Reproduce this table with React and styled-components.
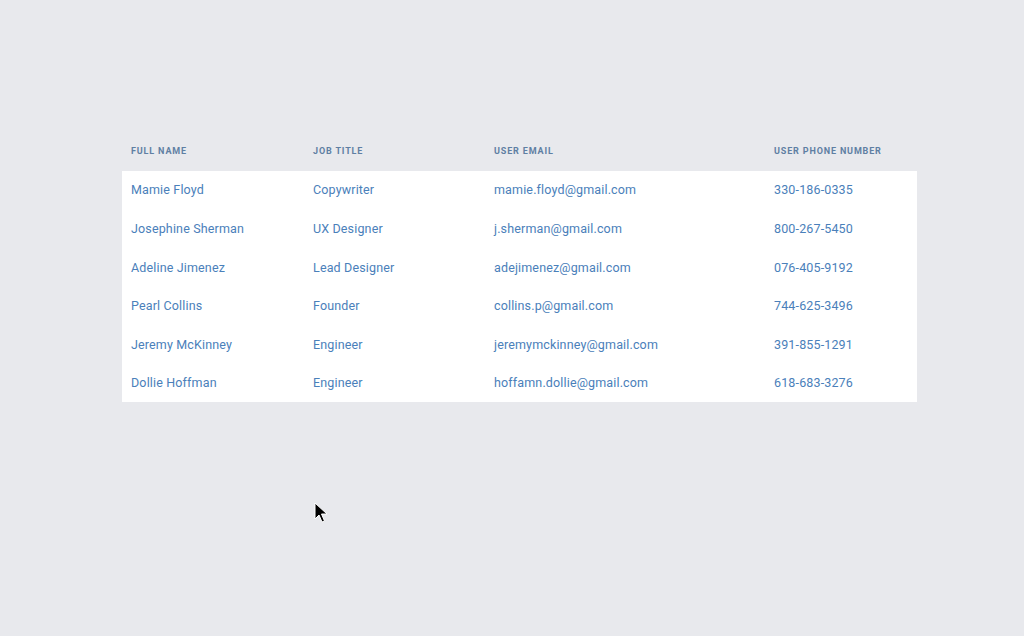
import React from "react";
import styled, { createGlobalStyle } from "styled-components";

const Global = createGlobalStyle`
  html, body { margin: 0; padding: 0; }
  body {
    background: #e8e9ed;
    font-family: "Roboto", sans-serif;
    width: 1024px;
    height: 636px;
    overflow: hidden;
  }
`;

const Page = styled.div`
  position: relative;
  width: 1024px;
  height: 636px;
  padding-top: 132px;
  box-sizing: border-box;
`;

const Table = styled.div`
  width: 795px;
  margin-left: 122px;
  display: grid;
  grid-template-columns: 182px 181px 280px 152px;
`;

const HeadCell = styled.div`
  height: 38.6px;
  display: flex;
  align-items: center;
  padding-left: 9px;
  font-family: "Roboto", sans-serif;
  font-weight: 700;
  font-size: 9px;
  letter-spacing: 0.85px;
  color: #5f7fa3;
  text-transform: uppercase;
`;

const Body = styled.div`
  grid-column: 1 / -1;
  display: grid;
  grid-template-columns: subgrid;
  background: #fff;
`;

const Cell = styled.div`
  height: 38.6px;
  display: flex;
  align-items: center;
  padding-left: 9px;
  font-family: "Roboto", sans-serif;
  font-size: 12.5px;
  letter-spacing: 0.15px;
  color: #4a80ba;
`;

const Cursor = styled.svg`
  position: absolute;
  left: 314px;
  top: 502px;
`;

const rows = [
  ["Mamie Floyd", "Copywriter", "mamie.floyd@gmail.com", "330-186-0335"],
  ["Josephine Sherman", "UX Designer", "j.sherman@gmail.com", "800-267-5450"],
  ["Adeline Jimenez", "Lead Designer", "adejimenez@gmail.com", "076-405-9192"],
  ["Pearl Collins", "Founder", "collins.p@gmail.com", "744-625-3496"],
  ["Jeremy McKinney", "Engineer", "jeremymckinney@gmail.com", "391-855-1291"],
  ["Dollie Hoffman", "Engineer", "hoffamn.dollie@gmail.com", "618-683-3276"],
];

const heads = ["Full Name", "Job Title", "User Email", "User Phone Number"];

export default function App() {
  return (
    <Page>
      <Global />
      <Table>
        {heads.map((h) => (
          <HeadCell key={h}>{h}</HeadCell>
        ))}
        <Body>
          {rows.map((r) =>
            r.map((c, i) => <Cell key={r[0] + i}>{c}</Cell>)
          )}
        </Body>
      </Table>
      <Cursor width="14" height="22" viewBox="0 0 14 22">
        <path
          d="M1 1 L1 17 L5 13 L8 20 L10.5 19 L7.5 12 L13 12 Z"
          fill="#000"
          stroke="#fff"
          strokeWidth="1"
          strokeLinejoin="round"
        />
      </Cursor>
    </Page>
  );
}
